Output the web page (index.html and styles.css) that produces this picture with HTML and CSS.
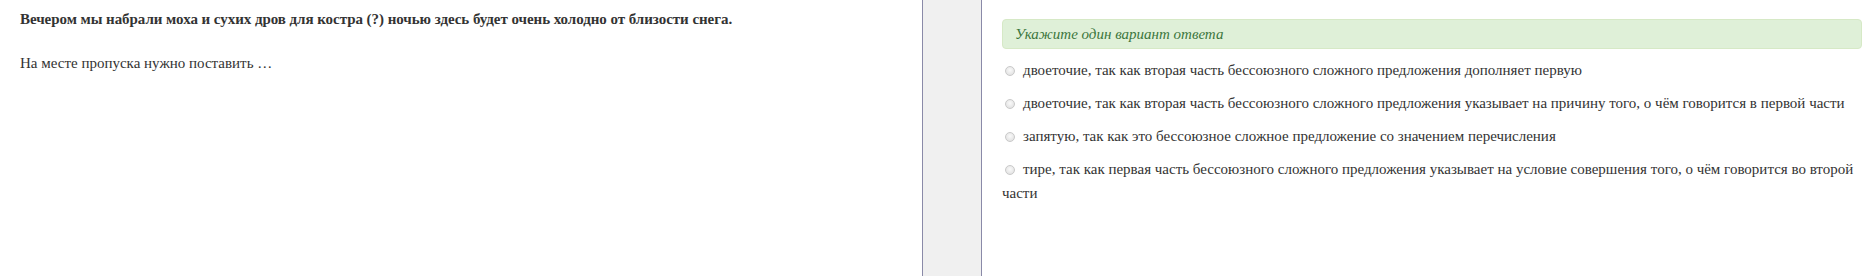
FILE: index.html
```html
<!DOCTYPE html>
<html lang="ru">
<head>
  <meta charset="UTF-8">
  <title>Задание</title>
  <link rel="stylesheet" href="styles.css">
</head>
<body>
  <div class="task">
    <div class="question">
      <p class="question-text">Вечером мы набрали моха и сухих дров для костра (?) ночью здесь будет очень холодно от близости снега.</p>
      <p class="question-ask">На месте пропуска нужно поставить …</p>
    </div>

    <div class="splitter"></div>

    <div class="answers">
      <div class="hint">Укажите один вариант ответа</div>
      <label class="option"><span class="radio"></span>двоеточие, так как вторая часть бессоюзного сложного предложения дополняет первую</label>
      <label class="option"><span class="radio"></span>двоеточие, так как вторая часть бессоюзного сложного предложения указывает на причину того, о чём говорится в первой части</label>
      <label class="option"><span class="radio"></span>запятую, так как это бессоюзное сложное предложение со значением перечисления</label>
      <label class="option"><span class="radio"></span>тире, так как первая часть бессоюзного сложного предложения указывает на условие совершения того, о чём говорится во второй части</label>
    </div>
  </div>
</body>
</html>
```

FILE: styles.css
```css
* {
  margin: 0;
  padding: 0;
  box-sizing: border-box;
}

html, body {
  height: 100%;
  background: #fff;
  font-family: "Liberation Serif", "Times New Roman", serif;
  color: #333;
}

.task {
  display: flex;
  height: 100%;
}

.question {
  width: 922px;
  padding: 9px 20px 0 20px;
}

.question-text {
  font-weight: bold;
  font-size: 15px;
  line-height: 20px;
  letter-spacing: -0.05px;
}

.question-ask {
  margin-top: 24px;
  font-size: 15px;
  line-height: 20px;
}

.splitter {
  width: 60px;
  background: #f0f0f0;
  border-left: 1px solid #8a8aa8;
  border-right: 1px solid #8a8aa8;
}

.answers {
  flex: 1;
  padding: 19px 8px 0 20px;
}

.hint {
  height: 30px;
  padding: 0 12px;
  line-height: 29px;
  background: #dff0d8;
  border: 1px solid #d6e9c6;
  border-radius: 4px;
  color: #3c763d;
  font-style: italic;
  font-size: 15px;
  margin-bottom: 9px;
}

.option {
  display: block;
  font-size: 15px;
  line-height: 24px;
  margin-bottom: 9px;
}

.radio {
  display: inline-block;
  width: 10px;
  height: 10px;
  margin: 0 8px 0 3px;
  border: 1px solid #c9c9c9;
  border-radius: 50%;
  background: radial-gradient(circle at 50% 40%, #fafafa, #dcdcdc);
  vertical-align: -1px;
}
```
